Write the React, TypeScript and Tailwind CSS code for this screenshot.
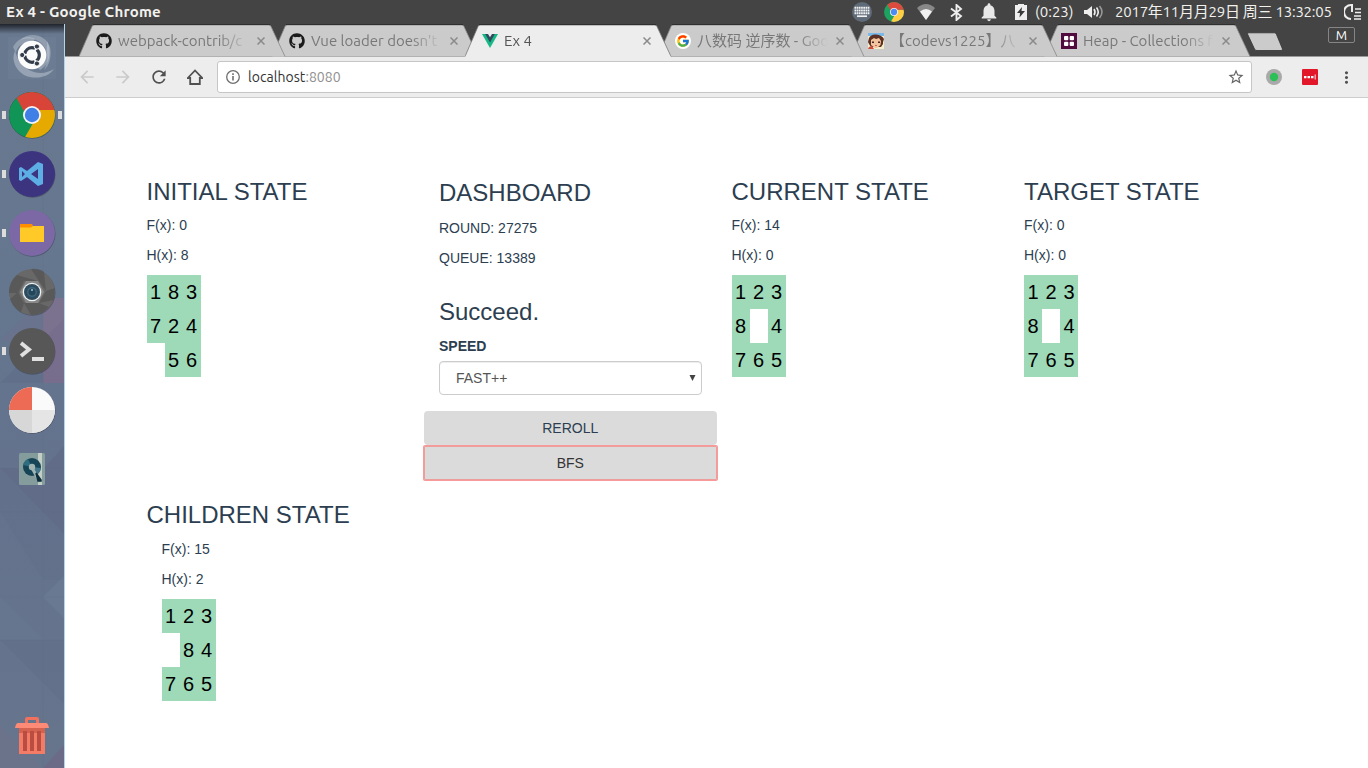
import React from 'react';
import { FaGithub } from 'react-icons/fa';
import { FcGoogle } from 'react-icons/fc';
import { MdArrowBack, MdArrowForward, MdRefresh, MdStarBorder, MdNotifications, MdMoreVert } from 'react-icons/md';

type IconProps = { className?: string };

function ChromeWheel({ id, red, green, yellow, blue }: { id: string; red: string; green: string; yellow: string; blue: string }) {
  return (
    <>
      <clipPath id={id}>
        <circle r="23" />
      </clipPath>
      <g clipPath={`url(#${id})`}>
        <rect x="-24" y="-24" width="48" height="48" fill={green} />
        <path d="M0-5H30V30L-10.7 28.5L4.33 2.5Z" fill={yellow} />
        <path d="M0-5H30V-30H-30L-19.3-23.5L-4.33 2.5Z" fill={red} />
      </g>
      <circle r="9" fill="#f4f4f4" />
      <circle r="7.2" fill={blue} />
    </>
  );
}

function LauncherItem({ running, focused, children }: { running?: boolean; focused?: boolean; children: React.ReactNode }) {
  return (
    <svg className="block h-[59px] w-16 shrink-0" viewBox="-32 -30 64 59">
      {running && <rect x="-30" y="-4" width="4" height="8" fill="#dcdcdc" />}
      {focused && <rect x="26" y="-4" width="4" height="8" fill="#dcdcdc" />}
      {children}
    </svg>
  );
}

function Disc({ fill }: { fill: string }) {
  return (
    <>
      <circle cx=".5" cy=".8" r="23" fill="#000" opacity=".25" />
      <circle r="23" fill={fill} />
    </>
  );
}

function Launcher() {
  return (
    <aside className="relative flex w-[65px] shrink-0 flex-col overflow-hidden border-r border-[#b5d3ea] bg-[#66758f]">
      <svg className="absolute inset-0 h-full w-16" viewBox="0 24 64 744" preserveAspectRatio="none">
        <defs>
          <linearGradient id="shade" x1="0" y1="0" x2="0" y2="1">
            <stop offset="0" stopColor="#20242c" />
            <stop offset="1" stopColor="#20242c" stopOpacity="0" />
          </linearGradient>
          <linearGradient id="wall" x1="0" y1="0" x2="0" y2="1">
            <stop offset="0" stopColor="#68788f" />
            <stop offset=".35" stopColor="#65778f" />
            <stop offset=".6" stopColor="#64728d" />
            <stop offset="1" stopColor="#66758c" />
          </linearGradient>
        </defs>
        <rect y="24" width="64" height="744" fill="url(#wall)" />
        <path d="M43 298H64V383H43Z" fill="#84708e" opacity=".7" />
        <path d="M0 341L43 298V341Z" fill="#73708c" opacity=".35" />
        <path d="M43 340L64 319V383H43Z" fill="#73678a" opacity=".4" />
        <path d="M0 383L43 341V383Z" fill="#5d6683" opacity=".35" />
        <path d="M43 469L64 446V534L0 468Z" fill="#5c6381" opacity=".4" />
        <path d="M0 468L64 534V580H43L0 512Z" fill="#5f6d88" opacity=".3" />
        <path d="M43 597L64 576V618Z" fill="#70829a" opacity=".4" />
        <path d="M0 597L43 640H0Z" fill="#70829a" opacity=".2" />
        <path d="M0 640L64 704V640Z" fill="#5c6984" opacity=".3" />
        <path d="M0 725L43 768H0Z" fill="#7b6f88" opacity=".25" />
        <path d="M43 768L64 745V768Z" fill="#745f80" opacity=".45" />
        <path d="M43 24V768M0 597H64M0 640H64M0 512H64M0 468H64" stroke="#56647c" opacity=".15" />
        <rect y="24" width="64" height="10" fill="url(#shade)" />
      </svg>
      <div className="relative flex flex-1 flex-col pt-0.5">
        <LauncherItem>
          <g transform="translate(0 -1)">
            <rect x="-24" y="-18" width="48" height="42" fill="#fff" opacity=".03" />
            <g fill="#e8edf4">
              <path d="M-12-15C-2-24 14-20 18-8C20 2 17 11 12 15C17 6 16-2 13-7C8-16-3-19-12-15Z" opacity=".3" />
              <path d="M-17-4C-22 6-14 20-2 22C8 24 17 21 22 14C16 18 6 20-3 15C-12 10-15 3-17-4Z" opacity=".35" />
              <path d="M-19-8C-14-17-5-20 3-16L0-11C-8-14-15-9-16-2Z" opacity=".3" />
              <path d="M15-14C20-4 18 10 8 15L5 12C12 8 16-3 15-14Z" opacity=".3" />
            </g>
            <circle r="14.3" fill="#fbfbfb" />
            <circle r="7.3" fill="none" stroke="#343e4b" strokeWidth="3.2" strokeDasharray="13.3 2" strokeDashoffset="6.6" />
            <circle cx="-9.8" cy="0" r="2.6" fill="#343e4b" stroke="#fbfbfb" />
            <circle cx="4.9" cy="-8.5" r="2.6" fill="#343e4b" stroke="#fbfbfb" />
            <circle cx="4.9" cy="8.5" r="2.6" fill="#343e4b" stroke="#fbfbfb" />
          </g>
        </LauncherItem>
        <LauncherItem running focused>
          <Disc fill="#333" />
          <ChromeWheel id="dockwheel" red="#d84437" green="#109556" yellow="#e6a900" blue="#4080e6" />
        </LauncherItem>
        <LauncherItem running>
          <Disc fill="#3d3480" />
          <path d="M6-12L11-10V10L6 12L-5 3L-11 7L-13 6V-6L-11-7L-5-3ZM6-5L-1 0L6 5ZM-10-3V3L-7 0Z" fill="#5eaee6" fillRule="evenodd" />
        </LauncherItem>
        <LauncherItem running>
          <Disc fill="#7b68a4" />
          <path d="M-12-9H0L1-7V-4H-12Z" fill="#ff8f00" />
          <path d="M-12-5.500H-1L1-7H12V9H-12Z" fill="#ffca28" />
        </LauncherItem>
        <LauncherItem>
          <Disc fill="#686868" />
          <g fill="#505050" opacity=".6">
            <path d="M-15-17L6-11H-8L-14 1L-23 1A23 23 0 0 1-15-17Z" />
            <path d="M12-20L14-1L7-11L-1-23Q7-24 12-20Z" />
            <path d="M22 8L7 11L14-1L23-4Z" />
            <path d="M-1 23L-8 11H7L17 15Q10 23-1 23Z" />
            <path d="M-22 7L-14 0L-8 11L-11 20Q-18 17-22 7Z" />
          </g>
          <path d="M-6-11H6L12 0L6 11H-6L-12 0Z" fill="#888" />
          <circle r="9.300" fill="#f0f0f0" />
          <circle r="8" fill="#2e4c60" />
          <circle r="5" fill="#416579" />
          <circle r="3.500" fill="#24465a" />
          <circle cy="-2" r="1" fill="#a4bdc8" />
        </LauncherItem>
        <LauncherItem running>
          <Disc fill="#575757" />
          <path d="M-11-8L-3-1.500L-11 5" fill="none" stroke="#e0e0e0" strokeWidth="3.800" />
          <path d="M0 6H12V10H0Z" fill="#e0e0e0" />
        </LauncherItem>
        <LauncherItem>
          <Disc fill="#fafafa" />
          <path d="M0 0V-23A23 23 0 0 0-23 0Z" fill="#ed6a55" />
          <path d="M0 0H-23A23 23 0 0 0 0 23Z" fill="#d7d7d7" />
          <path d="M0 0V23A23 23 0 0 0 23 0Z" fill="#e5e5e5" />
        </LauncherItem>
        <LauncherItem>
          <rect x="-13" y="-16" width="26" height="32" rx="1.500" fill="#849c9b" />
          <path d="M6-16H10V16H6Z" fill="#c3cec6" />
          <circle cy="-2" r="9" fill="#174558" />
          <path d="M0-2L-9-4A9 9 0 0 1-4-10Z" fill="#2e6c80" />
          <path d="M0-2L4 6A9 9 0 0 0 9-1Z" fill="#42768a" />
          <circle cy="-2" r="3.200" fill="#a1b4b4" />
          <path d="M0-1L8 13" stroke="#a1b4b4" strokeWidth="3" />
          <path d="M4 4L9 11V12H6Z" fill="#0d2e3c" stroke="#0d2e3c" strokeWidth="1.500" />
        </LauncherItem>
        <div className="flex-1" />
        <LauncherItem>
          <g transform="translate(0 -2)">
            <path d="M-7-14V-18Q-7-20-5-20H5Q7-20 7-18V-14H4V-17H-4V-14Z" fill="#ef715e" />
            <path d="M-13-10H13V17H-13Z" fill="#f47b65" />
            <path d="M-13-9H13V-4H-13Z" fill="#d5614f" />
            <path d="M-14-14H14Q16-14 17-9H-17Q-16-14-14-14Z" fill="#ff8b76" />
            <path d="M-9-6H-5V14H-9ZM-2-6H2V14H-2ZM5-6H9V14H5Z" fill="#b94d41" />
          </g>
        </LauncherItem>
      </div>
    </aside>
  );
}

function TopPanel() {
  return (
    <header className="flex h-6 shrink-0 items-center bg-[#444] pr-1.5 pl-1.5 text-[#f2f1ee]">
      <span className="text-[15px] leading-6 font-bold tracking-[0.23px]">Ex 4 - Google Chrome</span>
      <div className="ml-auto flex items-center">
        <svg className="h-5 w-5" viewBox="0 0 20 20">
          <circle cx="10" cy="10" r="10" fill="#5f6b78" />
          <path d="M2.500 5.800H17.500M2.500 8.500H17.500M2.500 11.200H17.500" stroke="#f2f2f2" strokeWidth="1.900" strokeDasharray="1.700 .5" />
          <path d="M5 14.200H15" stroke="#f2f2f2" strokeWidth="1.700" />
        </svg>
        <svg className="ml-3 h-5 w-5" viewBox="-23 -23 46 46">
          <ChromeWheel id="traywheel" red="#dd4b3e" green="#1da260" yellow="#ffce44" blue="#4b8bf4" />
        </svg>
        <svg className="ml-[13px] h-4 w-[18px]" viewBox="0 0 18 16">
          <path d="M0 4Q9-4 18 4L9 16Z" fill="#888" />
          <path d="M3 7.500Q9 2.500 15 7.500L9 16Z" fill="#f0f0f0" />
        </svg>
        <svg className="ml-[15px] h-[17px] w-[13px]" viewBox="0 0 13 17">
          <path d="M1 4.500L11 12L6.500 16V1L11 5L1 12.500" fill="none" stroke="#eee" strokeWidth="1.900" />
        </svg>
        <MdNotifications className="ml-[16px] h-5 w-5 scale-110 text-[#e8e8e8]" />
        <svg className="ml-[16px] h-4 w-3" viewBox="0 0 12 16">
          <path d="M0 1H3V0H9V1H12V16H0Z" fill="#eee" />
          <path d="M7 3L2 9H5L4.500 13.500L10 7H6.500Z" fill="#393939" />
        </svg>
        <span className="ml-[8px] w-[38px] text-[15px] leading-6 whitespace-nowrap">(0:23)</span>
        <svg className="ml-[11px] h-[14px] w-5" viewBox="0 0 20 14">
          <path d="M0 5H3L8 1V13L3 9H0Z" fill="#eee" />
          <path d="M10 4Q12 7 10 10M12.500 2.500Q16 7 12.500 11.500" fill="none" stroke="#eee" strokeWidth="1.600" />
          <path d="M15.500 1Q20.500 7 15.500 13" fill="none" stroke="#999" strokeWidth="1.500" />
        </svg>
        <span className="ml-[11px] w-[217px] text-[15px] leading-6 tracking-[-0.25px] whitespace-nowrap">2017年11月月29日 周三 13:32:05</span>
        <svg className="ml-[12px] h-4 w-[18px]" viewBox="0 0 18 16">
          <path d="M7 1A7 7 0 0 0 7 15" fill="none" stroke="#eee" strokeWidth="2" />
          <path d="M8 0V8" stroke="#eee" strokeWidth="2" />
          <path d="M11 5H17M11 8.500H17M10 12H17M10 15H17" stroke="#eee" strokeWidth="1.500" />
        </svg>
      </div>
    </header>
  );
}

function VueMark() {
  return (
    <svg className="h-4 w-4" viewBox="0 0 16 16">
      <path d="M0 1H16L8 15Z" fill="#14b985" />
      <path d="M3.200 1H12.800L8 9.500Z" fill="#34495e" />
      <path d="M6 1H10L8 4.300Z" fill="#ededed" />
    </svg>
  );
}

function Portrait() {
  return (
    <svg className="h-4 w-4" viewBox="0 0 16 16">
      <rect width="16" height="16" fill="#f5eccb" />
      <path d="M0 0H16V3H0Z" fill="#79b8e8" />
      <path d="M0 9L1 5Q3 1 8 1.500Q14 2 16 6L15 9V11L13 14H3L1 11Z" fill="#5c3024" />
      <path d="M3 7L6 5L8 6L11 5L13 8L12.500 12L9 15H7L3 12Z" fill="#f3c39d" />
      <path d="M4 8.500H6V10H4ZM10 8.500H12V10H10Z" fill="#442421" />
      <path d="M7 12.500H9" stroke="#bf6757" />
      <path d="M1 14L4 13L6 16H0Z" fill="#cf4b3b" />
    </svg>
  );
}

function HeapMark() {
  return (
    <svg className="h-4 w-4" viewBox="0 0 16 16">
      <rect width="16" height="16" fill="#520b3e" />
      <g fill="#fff">
        <rect x="3" y="3" width="4.300" height="4.300" rx="1" />
        <rect x="8.700" y="3" width="4.300" height="4.300" rx="1" />
        <rect x="3" y="8.700" width="4.300" height="4.300" rx="1" />
        <rect x="8.700" y="8.700" width="4.300" height="4.300" rx="1" />
      </g>
    </svg>
  );
}

function GoogleMark() {
  return (
    <span className="flex h-4 w-4 items-center justify-center rounded-full bg-white">
      <FcGoogle className="h-[14px] w-[14px] shrink-0" />
    </span>
  );
}

function Tab({ icon, title, active, order }: { icon: React.ReactNode; title: string; active?: boolean; order: string }) {
  return (
    <div className={`relative -ml-[14px] flex h-[33px] w-[207px] shrink-0 items-center pl-[17px] ${order}`}>
      <svg className="absolute inset-0 h-[33px] w-[207px]" viewBox="0 0 207 33">
        <path d="M0 32.500L13 2.500Q13.700 1 15 1H190Q191.300 1 192 2.500L206 32.500Z" fill={active ? '#ededed' : '#cbcbcb'} />
        <path d="M0 32.500L13 2.500Q13.700 1 15 1H190Q191.300 1 192 2.500L206 32.500" fill="none" stroke={active ? '#777' : '#888'} strokeWidth=".8" />
        <path d="M14 .5H191" stroke="#2f2f2f" />
        {active && <path d="M.5 32.500H205.500" stroke="#ededed" strokeWidth="1.500" />}
      </svg>
      <span className="relative flex h-4 w-4 shrink-0 items-center justify-center text-[#1b1b1b]">{icon}</span>
      <span className={`relative ml-[6px] w-[134px] text-[15px] leading-6 whitespace-nowrap [mask-image:linear-gradient(to_right,#000_100px,transparent_131px)] ${active ? 'text-[#555]' : 'text-[#787878]'}`}>
        {title}
      </span>
      <svg className="relative ml-[5px] h-2 w-2 shrink-0" viewBox="0 0 8 8">
        <path d="M.5.5L7.500 7.500M7.500.5L.5 7.500" stroke="#8a8a8a" strokeWidth="1.500" />
      </svg>
    </div>
  );
}

function TabStrip() {
  return (
    <div className="flex h-[33px] shrink-0 bg-[#444] pl-[28px] shadow-[inset_0_-1px_0_#999]">
      <Tab order="z-[6]" icon={<FaGithub className="h-4 w-4" />} title="webpack-contrib/c" />
      <Tab order="z-[5]" icon={<FaGithub className="h-4 w-4" />} title="Vue loader doesn't" />
      <Tab order="z-[7]" icon={<VueMark />} title="Ex 4" active />
      <Tab order="z-[4]" icon={<GoogleMark />} title="八数码 逆序数 - Goo" />
      <Tab order="z-[3]" icon={<Portrait />} title="【codevs1225】八" />
      <Tab order="z-[2]" icon={<HeapMark />} title="Heap - Collections f" />
      <svg className="mt-[8px] -ml-[5px] h-5 w-[38px] shrink-0" viewBox="0 0 38 20">
        <path d="M2.500.8H28.500Q30 .8 30.500 2.500L36.500 17Q37 18.500 35 18.500H11Q9 18.500 8.500 17L1.500 2Q1.500 .8 2.500 .8Z" fill="#cbcbcb" stroke="#333" strokeWidth=".8" />
      </svg>
      <div className="mt-[3px] mr-[13px] ml-auto flex h-4 w-[27px] items-center justify-center rounded-[2px] border border-[#858585] text-[13px] leading-4 text-white">M</div>
    </div>
  );
}

function HomeGlyph({ className }: IconProps) {
  return (
    <svg className={className} viewBox="0 0 16 16">
      <path d="M.8 9L8 1.500L15.200 9H12.800V15H3.200V9Z" fill="none" stroke="#505050" strokeWidth="1.800" />
    </svg>
  );
}

function Toolbar() {
  return (
    <div className="flex h-[41px] shrink-0 items-center border-b border-[#cdcdcd] bg-[#ededed] pl-3 text-[#505050]">
      <MdArrowBack className="h-5 w-5 text-[#cacaca]" />
      <MdArrowForward className="ml-4 h-5 w-5 text-[#cacaca]" />
      <MdRefresh className="ml-4 h-5 w-5" />
      <HomeGlyph className="ml-[18px] h-4 w-4" />
      <div className="ml-[14px] flex h-8 w-[1035px] items-center rounded-[3px] border border-[#c6c6c6] bg-white pl-2">
        <svg className="h-[14px] w-[14px]" viewBox="0 0 14 14">
          <circle cx="7" cy="7" r="6.300" fill="none" stroke="#6e6e6e" strokeWidth="1.300" />
          <path d="M7 6V10.500M7 3.300V4.900" stroke="#6e6e6e" strokeWidth="1.600" />
        </svg>
        <span className="ml-2 text-[14px] leading-6 tracking-[0.05px] text-[#333]">localhost<span className="text-[#8f8f8f]">:8080</span></span>
        <MdStarBorder className="mr-[6px] ml-auto h-[18px] w-[18px] text-[#666]" />
      </div>
      <svg className="ml-[14px] h-4 w-4" viewBox="0 0 16 16">
        <circle cx="8" cy="8" r="8" fill="#a9a9a9" />
        <circle cx="8" cy="8" r="4.200" fill="#2bbf57" />
      </svg>
      <svg className="ml-5 h-4 w-4" viewBox="0 0 16 16">
        <rect width="16" height="16" rx="1" fill="#e3172a" />
        <path d="M2 7H4.500V9.300H2ZM5.500 7H8V9.300H5.500ZM9 7H11.500V9.300H9ZM12.700 5.500H13.600V10.500H12.700Z" fill="#fff" />
      </svg>
      <MdMoreVert className="ml-[19px] h-[19px] w-[19px]" />
    </div>
  );
}

function Puzzle({ rows }: { rows: string[] }) {
  return (
    <div className="grid w-[54px] grid-cols-3 text-center text-[20px] leading-[34px] text-black">
      {rows.join('').split('').map((n, i) => (
        <span key={i} className={n === '0' ? 'h-[34px]' : 'h-[34px] bg-[#9ed9b8]'}>{n === '0' ? '' : n}</span>
      ))}
    </div>
  );
}

function State({ title, f, h, rows }: { title: string; f: number; h: number; rows: string[] }) {
  return (
    <section className="w-[292.500px] px-[15px]">
      <h3 className="mb-[10px] text-[24px] leading-[26.400px]">{title}</h3>
      <p className="mb-[10px]">F(x): {f}</p>
      <p className="mb-[10px]">H(x): {h}</p>
      <Puzzle rows={rows} />
    </section>
  );
}

function Dashboard() {
  return (
    <section className="w-[292.500px] pt-px">
      <div className="px-[15px]">
        <h3 className="mb-3 text-[24px] leading-[26.400px]">DASHBOARD</h3>
        <p className="mb-[10px]">ROUND: 27275</p>
        <p className="mb-[31px]">QUEUE: 13389</p>
        <h3 className="mb-[10px] text-[24px] leading-[26.400px]">Succeed.</h3>
        <p className="mb-[5px] font-bold">SPEED</p>
        <div className="flex h-[34px] items-center justify-between rounded-[4px] border border-[#ccc] bg-white pr-[5px] pl-4 text-[#555] shadow-[inset_0_1px_1px_rgba(0,0,0,0.075)]">
          <span>FAST++</span>
          <svg className="h-[6px] w-[7px]" viewBox="0 0 7 6">
            <path d="M.5 0H6.500L3.500 6Z" fill="#444" />
          </svg>
        </div>
      </div>
      <button className="mt-4 flex h-[34px] w-full items-center justify-center rounded-[4px] bg-[#dbdbdb]">REROLL</button>
      <button className="mt-px flex h-[34px] w-full items-center justify-center rounded-[1px] bg-[#dbdbdb] text-[#333] shadow-[0_0_0_1px_#f99a9a,inset_0_0_0_1px_#ee9d9d]">BFS</button>
    </section>
  );
}

export default function App() {
  return (
    <div className="flex h-[768px] w-[1368px] flex-col overflow-hidden bg-white font-['Ubuntu','Noto_Sans','Noto_Sans_CJK_SC',sans-serif]">
      <TopPanel />
      <div className="flex min-h-0 flex-1">
        <Launcher />
        <div className="flex min-w-0 flex-1 flex-col">
          <TabStrip />
          <Toolbar />
          <main className="mx-auto w-[1170px] flex-1 pt-[81px] font-['Liberation_Sans',Arial,sans-serif] text-[14px] leading-5 text-[#2c3e50]">
            <div className="flex h-[323px] items-start">
              <State title="INITIAL STATE" f={0} h={8} rows={['183', '724', '056']} />
              <Dashboard />
              <State title="CURRENT STATE" f={14} h={0} rows={['123', '804', '765']} />
              <State title="TARGET STATE" f={0} h={0} rows={['123', '804', '765']} />
            </div>
            <section className="px-[15px]">
              <h3 className="mb-[11px] text-[24px] leading-[26.400px]">CHILDREN STATE</h3>
              <div className="pl-[15px]">
                <p className="mb-[10px]">F(x): 15</p>
                <p className="mb-[10px]">H(x): 2</p>
                <Puzzle rows={['123', '084', '765']} />
              </div>
            </section>
          </main>
        </div>
      </div>
    </div>
  );
}
